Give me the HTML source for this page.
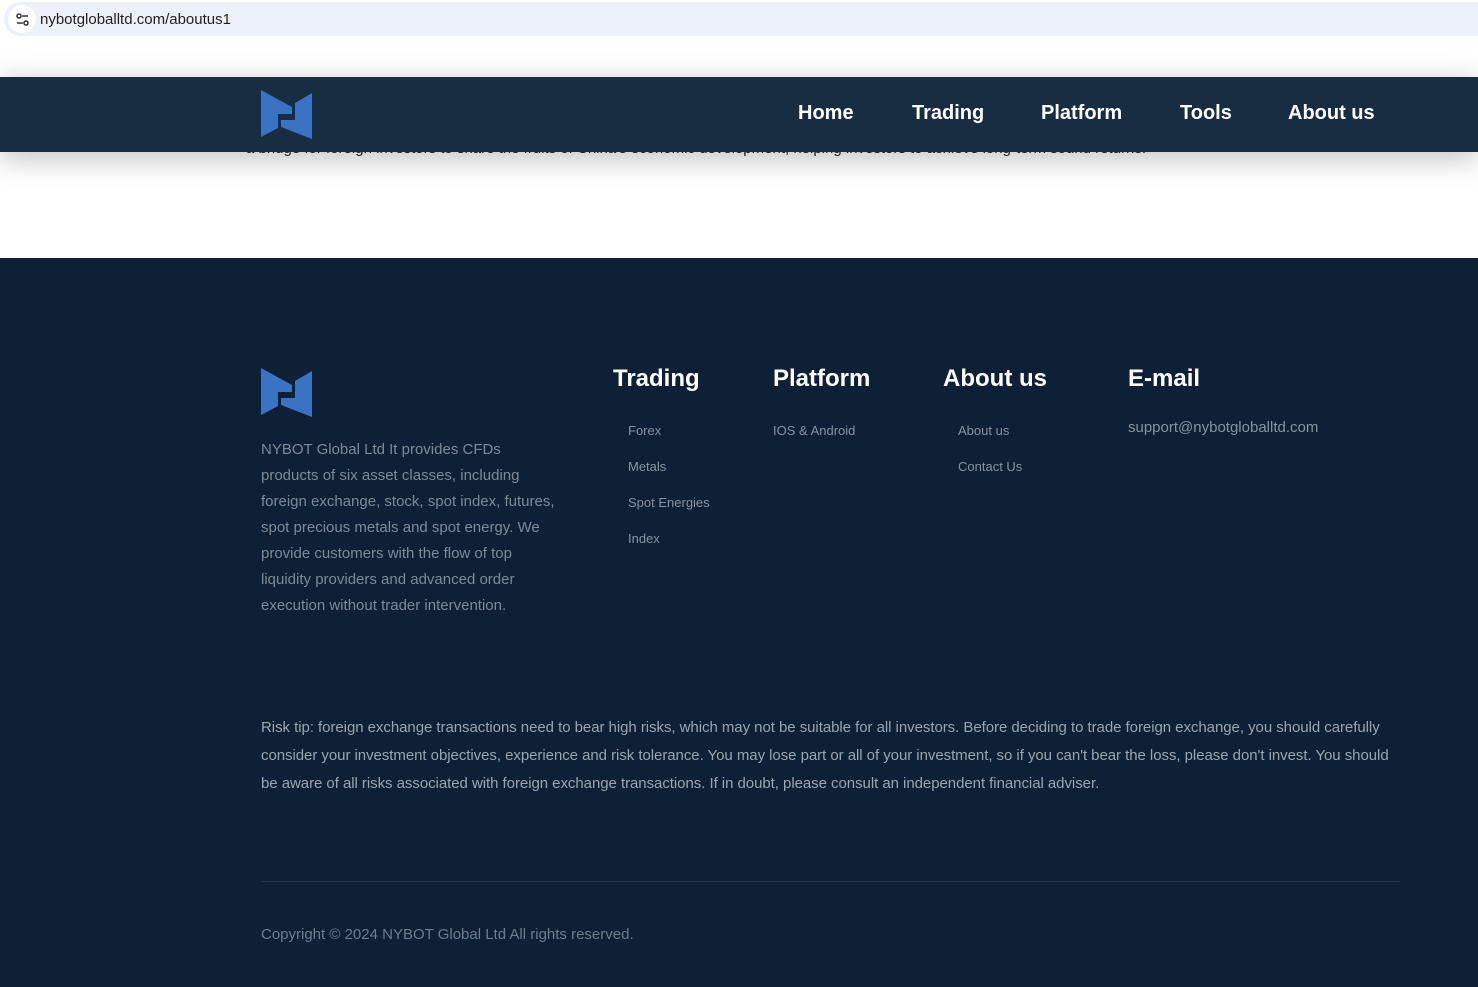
<!DOCTYPE html>
<html><head><meta charset="utf-8"><style>
*{margin:0;padding:0;box-sizing:border-box}
body{width:1478px;height:987px;overflow:hidden;background:#fff;font-family:"Liberation Sans",sans-serif;position:relative}
.abs{position:absolute}
.url{left:4px;top:2px;width:1480px;height:34px;background:#ecf0f8;border-radius:17px 0 0 17px}
.url .ic{position:absolute;left:4px;top:3px;width:28px;height:28px;border-radius:50%;background:#fff}
.url span{position:absolute;left:36px;top:9px;font-size:15px;color:#222}
.behind{left:246px;top:140px;font-size:15px;color:#222;white-space:nowrap}
.nav{left:0;top:77px;width:1478px;height:75px;background:#182c42;box-shadow:0 6px 30px rgba(0,0,0,.25)}
.nav a{position:absolute;top:25px;color:#fff;font-weight:bold;font-size:20px;text-decoration:none}
.foot{left:0;top:258px;width:1478px;height:729px;background:#0e2036}
h3{position:absolute;color:#fff;font-size:24px;font-weight:bold;top:365px}
.lk{position:absolute;color:#8793a1;font-size:13px}
.desc{left:261px;top:437px;font-size:15px;line-height:26px;color:#7d8a99;white-space:nowrap}
.risk{left:261px;top:714px;font-size:15px;line-height:28px;color:#9aa5b2;white-space:nowrap;letter-spacing:-0.05px}
.hr{left:261px;top:881px;width:1139px;height:1px;background:#24364c}
.copy{left:261px;top:926px;font-size:15px;color:#6f7d8c}
</style></head><body>
<div class="abs url"><div class="ic"><svg width="28" height="28" viewBox="0 0 28 28"><circle cx="11" cy="11" r="2" fill="none" stroke="#333" stroke-width="1.5"/><line x1="14" y1="11" x2="20" y2="11" stroke="#333" stroke-width="1.5"/><circle cx="18" cy="18" r="2" fill="none" stroke="#333" stroke-width="1.5"/><line x1="9" y1="18" x2="15" y2="18" stroke="#333" stroke-width="1.5"/></svg></div><span>nybotgloballtd.com/aboutus1</span></div>
<div class="abs behind">a bridge for foreign investors to share the fruits of China's economic development, helping investors to achieve long-term sound returns.</div>
<div class="abs nav">
<svg class="abs" style="left:261px;top:13px" width="52" height="50" viewBox="0 0 52 50"><polygon points="0,0 31,17 31,24 17,24 17,38 0,47" fill="#3a72c4"/><polygon points="51,3 34,13 34,30 20,30 20,37 51,49" fill="#3a72c4"/></svg>
<a style="left:798px">Home</a><a style="left:912px">Trading</a><a style="left:1041px">Platform</a><a style="left:1180px">Tools</a><a style="left:1288px">About us</a>
</div>
<div class="abs foot"></div>
<svg class="abs" style="left:261px;top:368px" width="52" height="50" viewBox="0 0 52 50"><polygon points="0,0 31,17 31,24 17,24 17,38 0,47" fill="#3a72c4"/><polygon points="51,3 34,13 34,30 20,30 20,37 51,49" fill="#3a72c4"/></svg>
<div class="abs desc">NYBOT Global Ltd It provides CFDs<br>products of six asset classes, including<br>foreign exchange, stock, spot index, futures,<br>spot precious metals and spot energy. We<br>provide customers with the flow of top<br>liquidity providers and advanced order<br>execution without trader intervention.</div>
<h3 style="left:613px">Trading</h3><h3 style="left:773px">Platform</h3><h3 style="left:943px">About us</h3><h3 style="left:1128px">E-mail</h3>
<div class="lk" style="left:628px;top:423px">Forex</div>
<div class="lk" style="left:628px;top:459px">Metals</div>
<div class="lk" style="left:628px;top:495px">Spot Energies</div>
<div class="lk" style="left:628px;top:531px">Index</div>
<div class="lk" style="left:773px;top:423px">IOS &amp; Android</div>
<div class="lk" style="left:958px;top:423px">About us</div>
<div class="lk" style="left:958px;top:459px">Contact Us</div>
<div class="lk" style="left:1128px;top:419px;font-size:15px">support@nybotgloballtd.com</div>
<div class="abs risk">Risk tip: foreign exchange transactions need to bear high risks, which may not be suitable for all investors. Before deciding to trade foreign exchange, you should carefully<br>consider your investment objectives, experience and risk tolerance. You may lose part or all of your investment, so if you can't bear the loss, please don't invest. You should<br>be aware of all risks associated with foreign exchange transactions. If in doubt, please consult an independent financial adviser.</div>
<div class="abs hr"></div>
<div class="abs copy">Copyright © 2024 NYBOT Global Ltd All rights reserved.</div>
</body></html>
